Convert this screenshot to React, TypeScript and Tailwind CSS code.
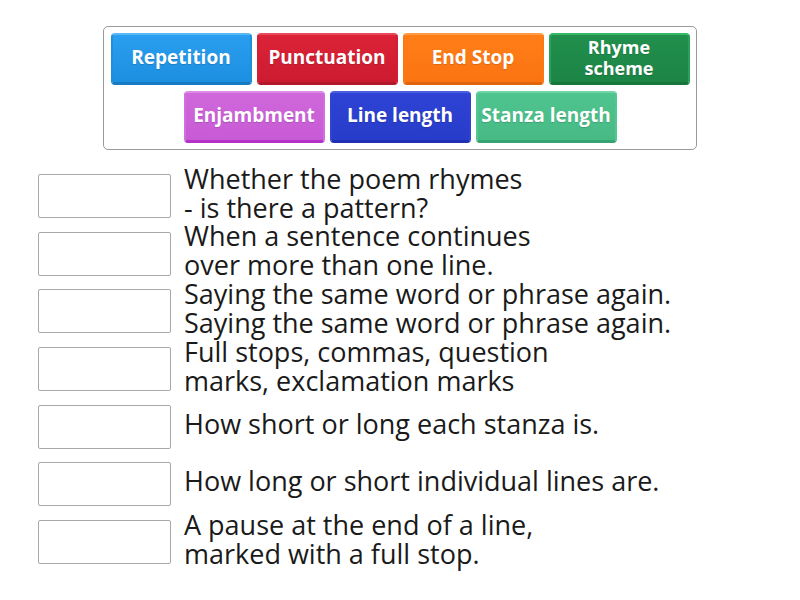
import React from "react";

const buttons1 = [
  { label: "Repetition", cls: "bg-gradient-to-b from-[#2a9ef0] to-[#1d8fe0] border-t-[#5ab8f5] border-x-[#1f8fdc] border-b-[#177bc4]" },
  { label: "Punctuation", cls: "bg-gradient-to-b from-[#dc2337] to-[#cc1b30] border-t-[#ea4b5b] border-x-[#d21f34] border-b-[#b3182a]" },
  { label: "End Stop", cls: "bg-gradient-to-b from-[#ff7e18] to-[#fb7412] border-t-[#ff9a45] border-x-[#fc7814] border-b-[#e0650c]" },
  { label: "Rhyme scheme", cls: "bg-gradient-to-b from-[#218f4d] to-[#1c8545] border-t-[#36b865] border-x-[#29a158] border-b-[#18763c]" },
];
const buttons2 = [
  { label: "Enjambment", cls: "bg-gradient-to-b from-[#cf68da] to-[#c85ad6] border-t-[#dc8ae5] border-x-[#d070dc] border-b-[#b532c8]" },
  { label: "Line length", cls: "bg-gradient-to-b from-[#2e43d4] to-[#283cca] border-t-[#4a5ee0] border-x-[#2e43d4] border-b-[#1f30b2]" },
  { label: "Stanza length", cls: "bg-gradient-to-b from-[#4fc48e] to-[#47ba85] border-t-[#6fd6a6] border-x-[#52c791] border-b-[#37a272]" },
];

function Btn({ label, cls }: { label: string; cls: string }) {
  return (
    <div
      className={`w-[141px] h-[52px] rounded-[4px] border-t-[2px] border-x-[2px] border-b-[3px] flex items-center justify-center text-center text-white font-bold text-[19px] leading-[21px] pb-[2px] whitespace-nowrap ${cls}`}
      style={{ fontFamily: '"Open Sans", sans-serif', textShadow: "0 1px 1px rgba(0,0,0,0.15)" }}
    >
      {label === "Rhyme scheme" ? (
        <span className="text-[18px] leading-[21px]">
          Rhyme
          <br />
          scheme
        </span>
      ) : (
        <span>{label}</span>
      )}
    </div>
  );
}

const rows: string[][] = [
  ["Whether the poem rhymes", "- is there a pattern?"],
  ["When a sentence continues", "over more than one line."],
  ["Saying the same word or phrase again.", "Saying the same word or phrase again."],
  ["Full stops, commas, question", "marks, exclamation marks"],
  ["How short or long each stanza is."],
  ["How long or short individual lines are."],
  ["A pause at the end of a line,", "marked with a full stop."],
];

export default function App() {
  return (
    <div className="w-[800px] h-[600px] bg-white overflow-hidden" style={{ fontFamily: '"Open Sans", sans-serif' }}>
      <div className="w-[594px] mx-auto mt-[26px] h-[124px] border border-[#9a9a9a] rounded-[5px] flex flex-col items-center justify-center gap-[6px]">
        <div className="flex gap-[5px]">
          {buttons1.map((b) => (
            <Btn key={b.label} {...b} />
          ))}
        </div>
        <div className="flex gap-[5px]">
          {buttons2.map((b) => (
            <Btn key={b.label} {...b} />
          ))}
        </div>
      </div>
      <div className="ml-[38px] mt-[24px] flex flex-col gap-[13.7px]">
        {rows.map((lines, i) => (
          <div key={i} className="flex items-center h-[44px]">
            <div className="w-[133px] h-[44px] border border-[#a8a8a8] rounded-[2px] bg-white shrink-0" />
            <div className="ml-[13px] -mt-[7px] text-[27px] leading-[29px] text-[#1a1a1a] whitespace-nowrap">
              {lines.map((l, j) => (
                <div key={j}>{l}</div>
              ))}
            </div>
          </div>
        ))}
      </div>
    </div>
  );
}
